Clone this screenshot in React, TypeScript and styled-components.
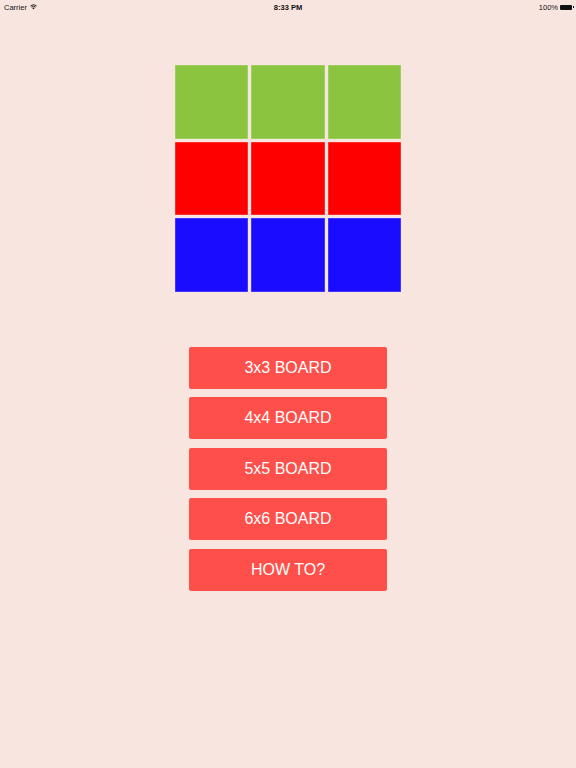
import React from "react"
import styled, { createGlobalStyle } from "styled-components"

const GlobalStyle = createGlobalStyle`
  html, body {
    margin: 0;
    padding: 0;
    background: #f9e5e0;
  }
  body {
    font-family: "Liberation Sans", Arial, sans-serif;
  }
`

const Screen = styled.div`
  width: 576px;
  height: 768px;
  display: flex;
  flex-direction: column;
  align-items: center;
  background: #f9e5e0;
  overflow: hidden;
`

const StatusBar = styled.div`
  width: 100%;
  height: 14px;
  box-sizing: border-box;
  padding: 0 4px;
  display: grid;
  grid-template-columns: 1fr auto 1fr;
  align-items: center;
  font-size: 7.5px;
  color: #111;
`

const Carrier = styled.div`
  display: flex;
  align-items: center;
  gap: 3px;
`

const Clock = styled.div`
  font-weight: bold;
`

const Battery = styled.div`
  display: flex;
  align-items: center;
  justify-content: flex-end;
  gap: 2px;
`

const BatteryBody = styled.span`
  width: 12px;
  height: 5px;
  background: #111;
  border-radius: 1px;
  position: relative;
  &::after {
    content: "";
    position: absolute;
    right: -2px;
    top: 1.5px;
    width: 1.5px;
    height: 2px;
    background: #111;
  }
`

const Board = styled.div`
  margin-top: 51px;
  display: grid;
  grid-template-columns: repeat(3, 73.5px);
  grid-auto-rows: 73.5px;
  gap: 3px;
`

const Tile = styled.div<{ $color: string }>`
  background: ${(p) => p.$color};
  box-shadow: inset 0 0 0 0.5px rgba(255, 255, 255, 0.35);
`

const Menu = styled.div`
  margin-top: 55px;
  display: flex;
  flex-direction: column;
  gap: 8.5px;
`

const MenuButton = styled.button`
  width: 198px;
  height: 42px;
  border: none;
  border-radius: 2px;
  background: #ff4f4a;
  color: #fff;
  font-family: "Liberation Sans", Arial, sans-serif;
  font-size: 16px;
  padding: 0;
  cursor: pointer;
`

const rows = ["#8bc540", "#ff0000", "#1a0dff"]
const boards = ["3x3 BOARD", "4x4 BOARD", "5x5 BOARD", "6x6 BOARD", "HOW TO?"]

const Wifi = () => (
  <svg width="7" height="6" viewBox="0 0 14 11">
    <path d="M7 10.5 L4.6 7.6 A3.6 3.6 0 0 1 9.4 7.6 Z" fill="#111" />
    <path d="M2.9 5.7 A6.2 6.2 0 0 1 11.1 5.7" stroke="#111" strokeWidth="1.8" fill="none" />
    <path d="M0.8 3.4 A9.3 9.3 0 0 1 13.2 3.4" stroke="#111" strokeWidth="1.8" fill="none" />
  </svg>
)

export default function App() {
  return (
    <>
      <GlobalStyle />
      <Screen>
        <StatusBar>
          <Carrier>
            Carrier <Wifi />
          </Carrier>
          <Clock>8:33 PM</Clock>
          <Battery>
            100% <BatteryBody />
          </Battery>
        </StatusBar>
        <Board>
          {rows.map((c, r) =>
            [0, 1, 2].map((i) => <Tile key={`${r}-${i}`} $color={c} />)
          )}
        </Board>
        <Menu>
          {boards.map((b) => (
            <MenuButton key={b}>{b}</MenuButton>
          ))}
        </Menu>
      </Screen>
    </>
  )
}
